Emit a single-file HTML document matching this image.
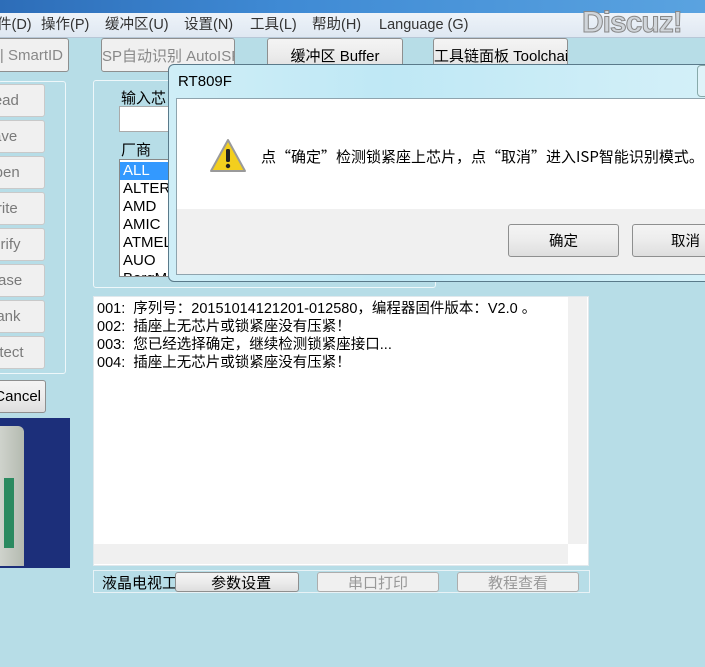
<!DOCTYPE html>
<html><head><meta charset="utf-8"><style>
*{margin:0;padding:0;box-sizing:border-box}
body{width:705px;height:667px;overflow:hidden;background:#b7dde7;font-family:"Liberation Sans","Noto Sans CJK SC",sans-serif;position:relative;font-size:14px;color:#000}
.a{position:absolute}
.btn{position:absolute;background:linear-gradient(#f4f4f4,#ececec 50%,#dedede);border:1px solid #8e8f8f;border-radius:3px;display:flex;align-items:center;justify-content:center;white-space:nowrap;overflow:hidden}
.lb{position:absolute;left:-24px;width:69px;height:33px;background:#f0f0f0;border:1px solid #c9c9c9;border-radius:3px;color:#7a7a7a;font-size:15px;padding-left:6px;line-height:31px;overflow:hidden;white-space:nowrap}
.grp{position:absolute;border:1px solid #eef7fa;border-radius:3px}
</style></head><body>
<div class="a" style="left:0;top:0;width:705px;height:13px;background:linear-gradient(90deg,#2d6db8,#3f8ad4 40%,#5aa3e0)"></div>
<div class="a" style="left:0;top:13px;width:705px;height:25px;background:linear-gradient(#eef3f9,#dfe8f2);border-bottom:1px solid #b7c7d7;font-size:14.5px;color:#333;line-height:25px;white-space:nowrap">
<span style="position:absolute;left:-3px">件(D)</span><span style="position:absolute;left:41px">操作(P)</span><span style="position:absolute;left:105px">缓冲区(U)</span><span style="position:absolute;left:184px">设置(N)</span><span style="position:absolute;left:250px">工具(L)</span><span style="position:absolute;left:312px">帮助(H)</span><span style="position:absolute;left:379px">Language (G)</span></div>
<div class="a" style="left:582px;top:6px;font-size:30px;font-weight:bold;color:#d0d5da;-webkit-text-stroke:1px #888;letter-spacing:-1px">Discuz!</div>
<div class="btn" style="left:-5px;top:38px;width:74px;height:34px;background:#f0f0f0;color:#888;font-size:15px;justify-content:flex-end;padding-right:5px">| SmartID</div>
<div class="btn" style="left:101px;top:38px;width:134px;height:34px;background:#f0f0f0;color:#888;font-size:15px;justify-content:flex-start">SP自动识别 AutoISP</div>
<div class="btn" style="left:267px;top:38px;width:136px;height:34px;font-size:15px">缓冲区 Buffer</div>
<div class="btn" style="left:433px;top:38px;width:135px;height:34px;font-size:15px;justify-content:flex-start">工具链面板 Toolchain</div>
<div class="grp" style="left:-2px;top:81px;width:68px;height:293px"></div>
<div class="lb" style="top:84px">Read</div><div class="lb" style="top:120px">Save</div><div class="lb" style="top:156px">Open</div><div class="lb" style="top:192px">Write</div><div class="lb" style="top:228px">Verify</div><div class="lb" style="top:264px">Erase</div><div class="lb" style="top:300px">Blank</div><div class="lb" style="top:336px;left:-31px;width:76px">Protect</div>
<div class="btn" style="left:-14px;top:380px;width:60px;height:33px;font-size:15px;justify-content:flex-end;padding-right:4px">Cancel</div>
<div class="a" style="left:0;top:418px;width:70px;height:150px;background:#1c2f7a">
<div class="a" style="left:0;top:8px;width:24px;height:140px;background:linear-gradient(90deg,#cfd3cc,#b4bab0);border-radius:0 6px 0 0"></div>
<div class="a" style="left:4px;top:60px;width:10px;height:70px;background:#2b8a60"></div></div>
<div class="grp" style="left:93px;top:80px;width:343px;height:208px"></div>
<div class="a" style="left:121px;top:87px;font-size:15px">输入芯</div>
<div class="a" style="left:119px;top:106px;width:60px;height:26px;background:#fff;border:1px solid #aaa"></div>
<div class="a" style="left:121px;top:139px;font-size:15px">厂商</div>
<div class="a" style="left:119px;top:159px;width:60px;height:118px;background:#fff;border:1px solid #888;font-size:15px;line-height:18px;overflow:hidden;padding-top:2px">
<div style="background:#3399ff;color:#fff;padding-left:3px">ALL</div><div style="padding-left:3px">ALTERA</div><div style="padding-left:3px">AMD</div><div style="padding-left:3px">AMIC</div><div style="padding-left:3px">ATMEL</div><div style="padding-left:3px">AUO</div><div style="padding-left:3px">BergM</div></div>
<div class="a" style="left:93px;top:296px;width:496px;height:270px;background:#fff;border:1px solid #e0e8ec;font-size:14.5px;line-height:18px;padding:3px 0 0 3px;white-space:nowrap">
001:&nbsp; 序列号：20151014121201-012580，编程器固件版本：V2.0 。<br>002:&nbsp; 插座上无芯片或锁紧座没有压紧！<br>003:&nbsp; 您已经选择确定，继续检测锁紧座接口...<br>004:&nbsp; 插座上无芯片或锁紧座没有压紧！</div>
<div class="a" style="left:568px;top:297px;width:19px;height:247px;background:#f0f0f0"></div>
<div class="a" style="left:94px;top:544px;width:474px;height:20px;background:#f0f0f0"></div>
<div class="a" style="left:93px;top:570px;width:497px;height:23px;border:1px solid #e8f2f6"></div>
<div class="a" style="left:102px;top:572px;font-size:15px">液晶电视工具</div>
<div class="btn" style="left:175px;top:572px;width:124px;height:20px;font-size:15px">&nbsp;&nbsp;参数设置</div>
<div class="btn" style="left:317px;top:572px;width:122px;height:20px;font-size:15px;color:#999;background:#f0f0f0;border-color:#adadad">串口打印</div>
<div class="btn" style="left:457px;top:572px;width:122px;height:20px;font-size:15px;color:#999;background:#f0f0f0;border-color:#adadad">教程查看</div>
<!-- dialog -->
<div class="a" style="left:168px;top:64px;width:545px;height:218px;background:linear-gradient(90deg,#cfeef7,#bfe8f5 40%,#d4f0f8);border:1px solid #5a7a8a;border-radius:6px 0 0 6px">
<div class="a" style="left:9px;top:8px;font-size:15px">RT809F</div>
<div class="a" style="left:528px;top:0;width:20px;height:32px;border:1px solid #8aa;border-radius:4px;background:#dff3f9"></div>
<div class="a" style="left:7px;top:33px;width:540px;height:177px;background:#f0f0f0;border:1px solid #8fa4ae">
<div style="height:110px;background:#fff"></div></div>
<svg class="a" style="left:40px;top:73px" width="38" height="36" viewBox="0 0 38 36"><path d="M19 2 L36 33 L2 33 Z" fill="#f3cf1e" stroke="#9a9a9a" stroke-width="2" stroke-linejoin="round"/><rect x="17" y="11" width="4" height="13" rx="1.5" fill="#222"/><circle cx="19" cy="28" r="2.2" fill="#222"/></svg>
<div class="a" style="left:92px;top:81px;font-size:15px;white-space:nowrap;font-family:'Noto Sans CJK SC',sans-serif">点“确定”检测锁紧座上芯片，点“取消”进入ISP智能识别模式。</div>
<div class="btn" style="left:339px;top:159px;width:111px;height:33px;font-size:14.5px">确定</div>
<div class="btn" style="left:463px;top:159px;width:111px;height:33px;font-size:14.5px;justify-content:flex-start;padding-left:38px">取消</div>
</div>
</body></html>
